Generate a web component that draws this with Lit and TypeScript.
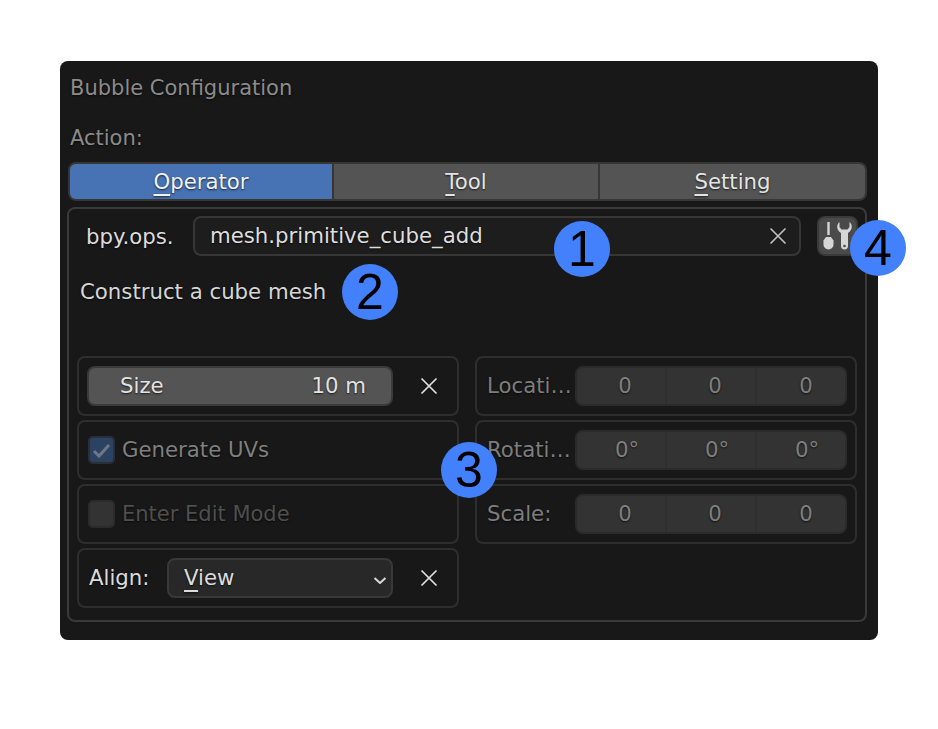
import { LitElement, html, css } from "lit";
import { customElement } from "lit/decorators.js";

const closeIcon = html`<svg class="x" viewBox="0 0 18 18" width="18" height="18"><path d="M1.5 1.5 16.5 16.5M16.5 1.5 1.5 16.5" stroke="currentColor" stroke-width="1.7" fill="none"/></svg>`;

@customElement("app-root")
export class AppRoot extends LitElement {
  static styles = css`
    :host {
      display: block;
      position: relative;
      width: 938px;
      height: 729px;
      background: #fff;
      overflow: hidden;
      font-family: "DejaVu Sans", sans-serif;
      font-size: 21.25px;
      color: #dcdcdc;
      --shadow: 0 1px 2px rgba(0, 0, 0, 0.7);
    }
    .panel {
      position: relative;
      top: 61px;
      left: 60px;
      box-sizing: border-box;
      width: 818px;
      height: 579px;
      padding: 0 11px 18px 7px;
      background: #181818;
      border-radius: 8px;
      display: flex;
      flex-direction: column;
      text-shadow: var(--shadow);
    }
    .title { height: 53px; line-height: 55px; padding-left: 3px; color: #8b8b8b; white-space: nowrap; font-size: 21px; }
    .action { height: 48px; line-height: 48px; padding-left: 3px; color: #8b8b8b; font-size: 21px; }
    .tabs {
      display: grid;
      grid-template-columns: 262px 266px 1fr;
      height: 39px;
      margin-left: 1px;
      box-sizing: border-box;
      border: 2px solid #363636;
      border-radius: 8px;
      overflow: hidden;
      background: #545454;
    }
    .tab {
      display: flex;
      align-items: center;
      justify-content: center;
      color: #e4e4e4;
      border-left: 2px solid #363636;
    }
    .tab:first-child { border-left: 0; background: #4772b3; color: #f0f0f0; }
    .u {
      text-decoration: underline;
      text-decoration-thickness: 2px;
      text-underline-offset: 5px;
      text-decoration-skip-ink: none;
    }
    .box {
      flex: 1;
      margin-top: 6px;
      box-sizing: border-box;
      border: 2px solid #3a3a3a;
      border-radius: 8px;
      padding: 7px 7px 12px 8px;
      display: flex;
      flex-direction: column;
    }
    .top { display: flex; align-items: center; height: 40px; }
    .prefix { margin-left: 9px; width: 90px; margin-right: 17px; color: #dcdcdc; white-space: nowrap; flex: none; }
    .input {
      box-sizing: border-box;
      flex: none;
      width: 608px;
      height: 40px;
      border: 2px solid #363636;
      border-radius: 8px;
      background: #1d1d1d;
      padding: 0 12px 0 15px;
      display: flex;
      align-items: center;
      justify-content: space-between;
      color: #dedede;
    }
    .input span { position: relative; top: -1px; }
    .input .x { color: #bdbdbd; }
    .tool {
      box-sizing: border-box;
      flex: none;
      margin-left: 16px;
      width: 41px;
      height: 40px;
      background: #4a4a4a;
      border: 2px solid #3a3a3a;
      border-radius: 8px;
      display: flex;
      align-items: center;
      justify-content: center;
    }
    .desc { height: 70px; line-height: 71px; padding-left: 3px; color: #d6d6d6; }
    .grid {
      margin-top: 30px;
      display: grid;
      grid-template-columns: 382px 382px;
      grid-auto-rows: 60px;
      column-gap: 16px;
      row-gap: 4px;
    }
    .left { grid-column: 1; display: flex; flex-direction: column; gap: 4px; grid-row: span 4; }
    .right { grid-column: 2; display: flex; flex-direction: column; gap: 4px; grid-row: span 3; }
    .card {
      box-sizing: border-box;
      height: 60px;
      flex: none;
      border: 2px solid #2e2e2e;
      border-radius: 8px;
      padding: 0 8px;
      display: flex;
      align-items: center;
      line-height: 34px;
    }
    .field {
      box-sizing: border-box;
      height: 40px;
      border-radius: 8px;
      border: 2px solid #3a3a3a;
    }
    .size {
      width: 306px;
      background: #545454;
      display: flex;
      align-items: center;
      justify-content: space-between;
      padding: 0 25px 0 31px;
      color: #e2e2e2;
    }
    .card > .x { margin-left: 27px; color: #e0e0e0; }
    .check {
      box-sizing: border-box;
      width: 27px;
      height: 28px;
      margin-left: 1px;
      border-radius: 5px;
      display: flex;
      align-items: center;
      justify-content: center;
      flex: none;
    }
    .check.on { background: #2c4262; border: 2px solid #2a2f38; }
    .check.off { background: #333333; border: 2px solid #2b2b2b; }
    .chk-label { margin-left: 7px; color: #7f7f7f; }
    .chk-label.dim { color: #4f4f4f; font-size: 21px; }
    .align-label { margin-left: 2px; width: 78px; color: #dcdcdc; flex: none; }
    .select {
      width: 226px;
      background: #282828;
      display: flex;
      align-items: center;
      justify-content: space-between;
      padding: 0 3px 0 15px;
      color: #dcdcdc;
      border-color: #383838;
    }
    .rlabel { width: 90px; flex: none; padding-left: 2px; box-sizing: border-box; color: #7d7d7d; white-space: nowrap; }
    .vec {
      width: 272px;
      display: grid;
      grid-template-columns: 88px 90px 1fr;
      background: #333333;
      border-color: #2b2b2b;
      overflow: hidden;
      color: #7f7f7f;
      flex: none;
    }
    .vec span {
      display: flex;
      align-items: center;
      justify-content: center;
      padding-left: 8px;
      border-left: 2px solid #2f2f2f;
    }
    .vec span:first-child { border-left: 0; }
    .vec span:last-child { padding-left: 10px; }
    .vec.deg span { padding-left: 12px; }
    .badge {
      position: absolute;
      width: 56px;
      height: 56px;
      margin: -28px 0 0 -28px;
      border-radius: 50%;
      background: #4380fb;
      color: #000;
      font-family: "Liberation Sans", Arial, sans-serif;
      font-size: 50px;
      line-height: 56px;
      text-align: center;
      text-shadow: none;
    }
  `;

  render() {
    return html`
      <div class="panel">
        <div class="title">Bubble Configuration</div>
        <div class="action">Action:</div>
        <div class="tabs">
          <div class="tab"><span><span class="u">O</span>perator</span></div>
          <div class="tab"><span><span class="u">T</span>ool</span></div>
          <div class="tab"><span><span class="u">S</span>etting</span></div>
        </div>
        <div class="box">
          <div class="top">
            <span class="prefix">bpy.ops.</span>
            <div class="input"><span>mesh.primitive_cube_add</span>${closeIcon}</div>
            <div class="tool">
              <svg width="36" height="34" viewBox="0 0 36 34">
                <path d="M8.500 3V16" stroke="#d6d6d6" stroke-width="2.400" fill="none"/>
                <path d="M6 18h5l2.500 3.500v4a5 5 0 0 1-10 0v-4z" fill="#d6d6d6"/>
                <path d="M19.500 3C16.500 5 16 11 21 14V27a3.500 3.500 0 0 0 7 0V14C33 11 32.500 5 29.500 3V8L27.500 10.500H21.500L19.500 8Z" fill="#d6d6d6"/>
                <circle cx="24.500" cy="27" r="1.300" fill="#4a4a4a"/>
              </svg>
            </div>
          </div>
          <div class="desc">Construct a cube mesh</div>
          <div class="grid">
            <div class="left">
              <div class="card">
                <div class="field size"><span>Size</span><span>10 m</span></div>
                ${closeIcon}
              </div>
              <div class="card">
                <div class="check on">
                  <svg width="21" height="19" viewBox="0 0 21 19"><path d="M3 10l5 5 10-11" stroke="#6f7784" stroke-width="3" fill="none"/></svg>
                </div>
                <span class="chk-label">Generate UVs</span>
              </div>
              <div class="card">
                <div class="check off"></div>
                <span class="chk-label dim">Enter Edit Mode</span>
              </div>
              <div class="card">
                <span class="align-label">Align:</span>
                <div class="field select">
                  <span><span class="u">V</span>iew</span>
                  <svg class="chev" width="16" height="12" viewBox="0 0 16 12"><path d="M2.500 6 8 11 13.500 6" stroke="#d8d8d8" stroke-width="2" fill="none"/></svg>
                </div>
                ${closeIcon}
              </div>
            </div>
            <div class="right">
              <div class="card">
                <span class="rlabel">Locati…</span>
                <div class="field vec"><span>0</span><span>0</span><span>0</span></div>
              </div>
              <div class="card">
                <span class="rlabel">Rotati…</span>
                <div class="field vec deg"><span>0°</span><span>0°</span><span>0°</span></div>
              </div>
              <div class="card">
                <span class="rlabel">Scale:</span>
                <div class="field vec"><span>0</span><span>0</span><span>0</span></div>
              </div>
            </div>
          </div>
        </div>
        <div class="badge" style="left:522px;top:188px">1</div>
        <div class="badge" style="left:310px;top:231px">2</div>
        <div class="badge" style="left:409px;top:409px">3</div>
        <div class="badge" style="left:818px;top:187px">4</div>
      </div>
    `;
  }
}
